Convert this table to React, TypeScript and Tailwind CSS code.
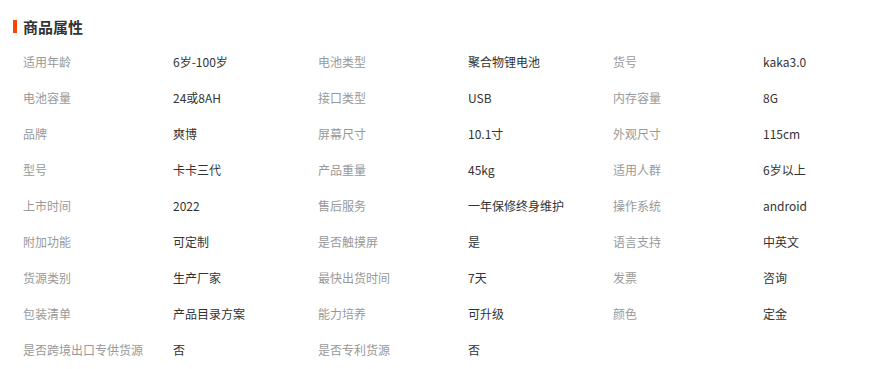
import React from "react";

const rows: [string, string][][] = [
  [["适用年龄", "6岁-100岁"], ["电池类型", "聚合物锂电池"], ["货号", "kaka3.0"]],
  [["电池容量", "24或8AH"], ["接口类型", "USB"], ["内存容量", "8G"]],
  [["品牌", "爽博"], ["屏幕尺寸", "10.1寸"], ["外观尺寸", "115cm"]],
  [["型号", "卡卡三代"], ["产品重量", "45kg"], ["适用人群", "6岁以上"]],
  [["上市时间", "2022"], ["售后服务", "一年保修终身维护"], ["操作系统", "android"]],
  [["附加功能", "可定制"], ["是否触摸屏", "是"], ["语言支持", "中英文"]],
  [["货源类别", "生产厂家"], ["最快出货时间", "7天"], ["发票", "咨询"]],
  [["包装清单", "产品目录方案"], ["能力培养", "可升级"], ["颜色", "定金"]],
  [["是否跨境出口专供货源", "否"], ["是否专利货源", "否"]],
];

export default function App() {
  return (
    <div
      className="w-[888px] h-[369px] overflow-hidden bg-white"
      style={{ fontFamily: '"Microsoft YaHei", "Noto Sans CJK SC", "Noto Sans", sans-serif' }}
    >
      <div className="pt-[19px] pl-[13px] flex items-center gap-[6px]">
        <div className="w-[4px] h-[13px] bg-[#ff4400]" />
        <div className="text-[15px] leading-[15px] font-bold text-[#333333]">商品属性</div>
      </div>
      <div className="mt-[10px] pl-[23px]">
        {rows.map((row, i) => (
          <div
            key={i}
            className="grid grid-cols-[150px_145px_150px_145px_150px_125px] h-[36px] items-center text-[12px] leading-[16px]"
          >
            {row.map(([k, v], j) => (
              <React.Fragment key={j}>
                <div className="text-[#999999] whitespace-nowrap">{k}</div>
                <div className="text-[#333333] whitespace-nowrap">{v}</div>
              </React.Fragment>
            ))}
          </div>
        ))}
      </div>
    </div>
  );
}
